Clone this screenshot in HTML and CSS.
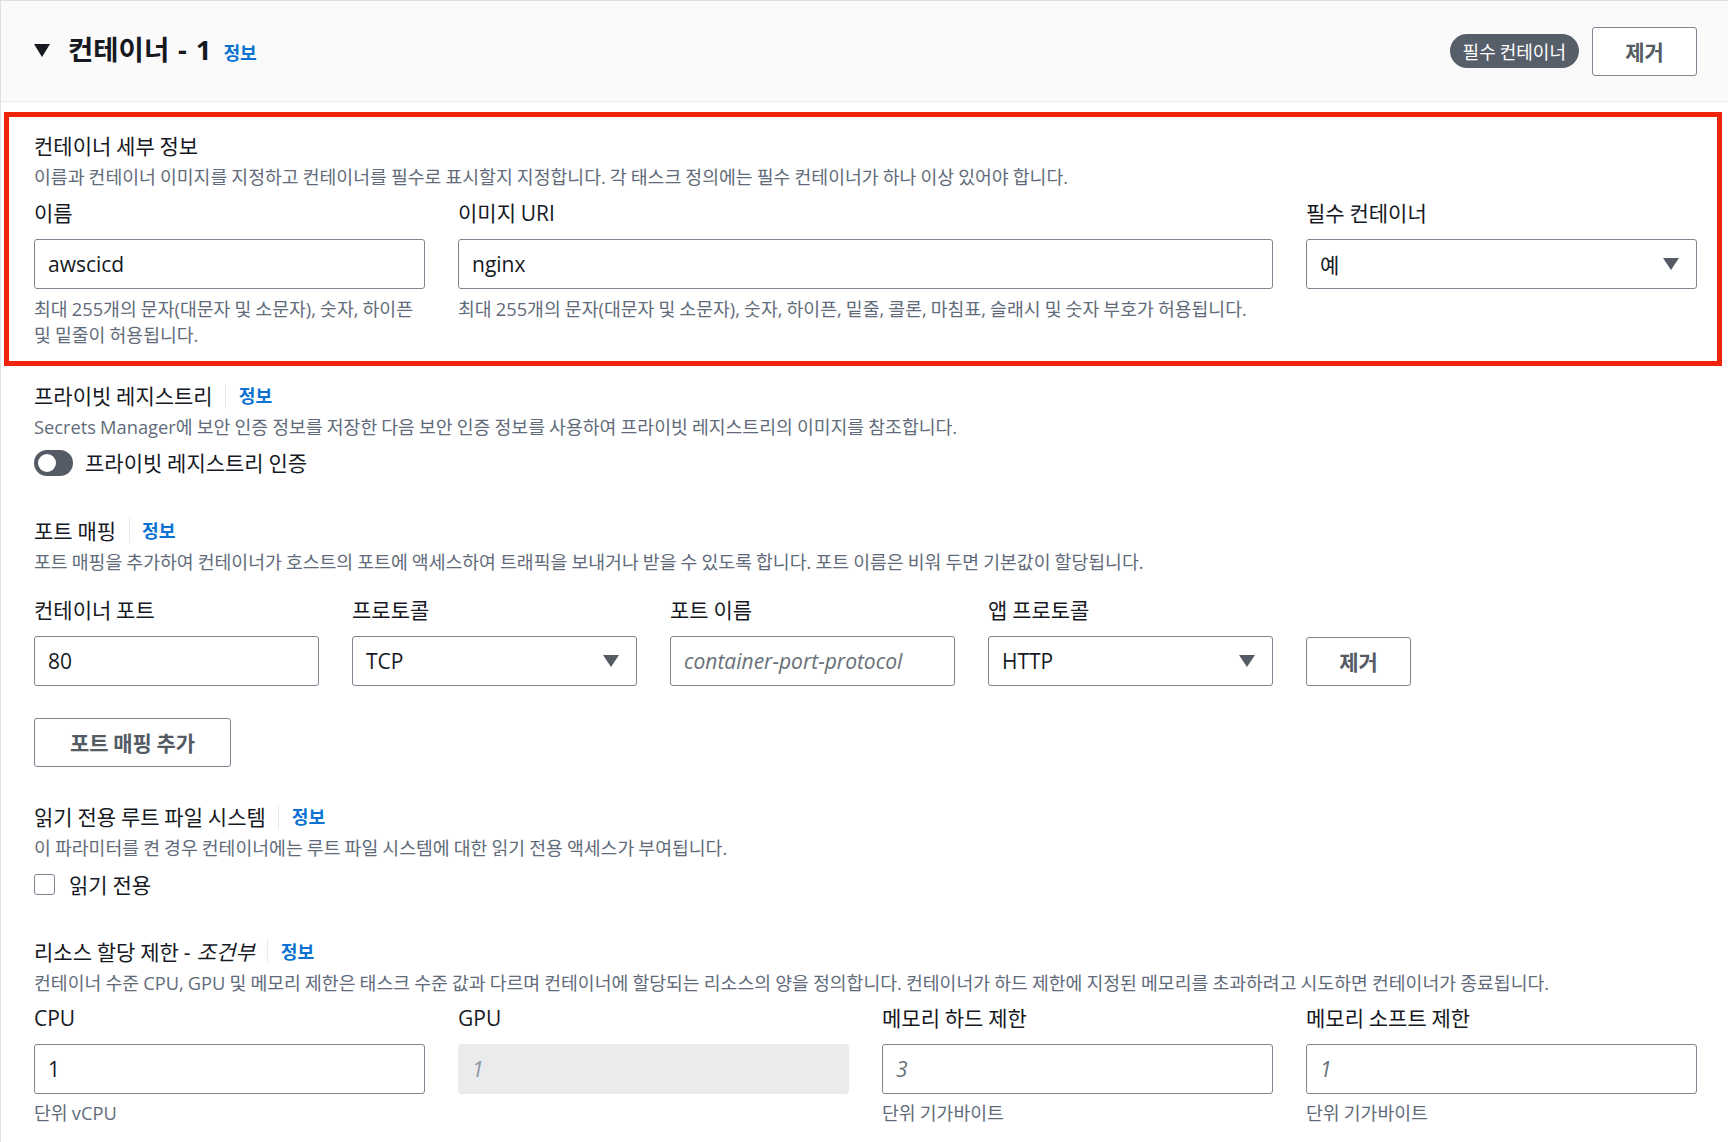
FILE: index.html
```html
<!DOCTYPE html>
<html lang="ko">
<head>
    <meta charset="UTF-8">
    <meta name="viewport" content="width=device-width, initial-scale=1.0">
    <title>컨테이너 - 1</title>
    <link rel="stylesheet" href="styles.css">
</head>
<body>
    <div class="panel">
        <header class="panel-header">
            <div class="title-group">
                <svg class="expand-caret" width="16" height="13" viewBox="0 0 16 13"><path d="M0 0h16L8 13z"/></svg>
                <h2 class="panel-title">컨테이너 - 1<a class="info-link title-info" href="#">정보</a></h2>
            </div>
            <div class="header-actions">
                <span class="badge">필수 컨테이너</span>
                <button class="btn btn-header">제거</button>
            </div>
        </header>

        <section class="section section-details">
            <h3 class="section-title">컨테이너 세부 정보</h3>
            <p class="section-desc">이름과 컨테이너 이미지를 지정하고 컨테이너를 필수로 표시할지 지정합니다. 각 태스크 정의에는 필수 컨테이너가 하나 이상 있어야 합니다.</p>
            <div class="field-grid">
                <div class="field">
                    <label class="field-label">이름</label>
                    <div class="input">awscicd</div>
                    <p class="field-help">최대 255개의 문자(대문자 및 소문자), 숫자, 하이픈 및 밑줄이 허용됩니다.</p>
                </div>
                <div class="field field-wide">
                    <label class="field-label">이미지 URI</label>
                    <div class="input">nginx</div>
                    <p class="field-help">최대 255개의 문자(대문자 및 소문자), 숫자, 하이픈, 밑줄, 콜론, 마침표, 슬래시 및 숫자 부호가 허용됩니다.</p>
                </div>
                <div class="field">
                    <label class="field-label">필수 컨테이너</label>
                    <div class="input select">
                        <span>예</span>
                        <svg class="select-caret" width="16" height="12" viewBox="0 0 16 12"><path d="M0 0h16L8 12z"/></svg>
                    </div>
                </div>
            </div>
        </section>

        <section class="section section-registry">
            <h3 class="section-title">프라이빗 레지스트리<span class="divider"></span><a class="info-link" href="#">정보</a></h3>
            <p class="section-desc">Secrets Manager에 보안 인증 정보를 저장한 다음 보안 인증 정보를 사용하여 프라이빗 레지스트리의 이미지를 참조합니다.</p>
            <label class="toggle-row">
                <span class="toggle"><span class="toggle-knob"></span></span>
                프라이빗 레지스트리 인증
            </label>
        </section>

        <section class="section section-ports">
            <h3 class="section-title">포트 매핑<span class="divider"></span><a class="info-link" href="#">정보</a></h3>
            <p class="section-desc">포트 매핑을 추가하여 컨테이너가 호스트의 포트에 액세스하여 트래픽을 보내거나 받을 수 있도록 합니다. 포트 이름은 비워 두면 기본값이 할당됩니다.</p>
            <div class="port-grid">
                <div class="field">
                    <label class="field-label">컨테이너 포트</label>
                    <div class="input">80</div>
                </div>
                <div class="field">
                    <label class="field-label">프로토콜</label>
                    <div class="input select">
                        <span>TCP</span>
                        <svg class="select-caret" width="16" height="12" viewBox="0 0 16 12"><path d="M0 0h16L8 12z"/></svg>
                    </div>
                </div>
                <div class="field">
                    <label class="field-label">포트 이름</label>
                    <div class="input placeholder">container-port-protocol</div>
                </div>
                <div class="field">
                    <label class="field-label">앱 프로토콜</label>
                    <div class="input select">
                        <span>HTTP</span>
                        <svg class="select-caret" width="16" height="12" viewBox="0 0 16 12"><path d="M0 0h16L8 12z"/></svg>
                    </div>
                </div>
                <div class="field field-action">
                    <button class="btn btn-row">제거</button>
                </div>
            </div>
            <button class="btn btn-add">포트 매핑 추가</button>
        </section>

        <section class="section section-readonly">
            <h3 class="section-title">읽기 전용 루트 파일 시스템<span class="divider"></span><a class="info-link" href="#">정보</a></h3>
            <p class="section-desc">이 파라미터를 켠 경우 컨테이너에는 루트 파일 시스템에 대한 읽기 전용 액세스가 부여됩니다.</p>
            <label class="check-row">
                <span class="checkbox"></span>
                읽기 전용
            </label>
        </section>

        <section class="section section-limits">
            <h3 class="section-title">리소스 할당 제한 - <em class="optional">조건부</em><span class="divider"></span><a class="info-link" href="#">정보</a></h3>
            <p class="section-desc">컨테이너 수준 CPU, GPU 및 메모리 제한은 태스크 수준 값과 다르며 컨테이너에 할당되는 리소스의 양을 정의합니다. 컨테이너가 하드 제한에 지정된 메모리를 초과하려고 시도하면 컨테이너가 종료됩니다.</p>
            <div class="field-grid limits-grid">
                <div class="field">
                    <label class="field-label">CPU</label>
                    <div class="input">1</div>
                    <p class="field-help">단위 vCPU</p>
                </div>
                <div class="field">
                    <label class="field-label">GPU</label>
                    <div class="input input-disabled placeholder">1</div>
                </div>
                <div class="field">
                    <label class="field-label">메모리 하드 제한</label>
                    <div class="input placeholder">3</div>
                    <p class="field-help">단위 기가바이트</p>
                </div>
                <div class="field">
                    <label class="field-label">메모리 소프트 제한</label>
                    <div class="input placeholder">1</div>
                    <p class="field-help">단위 기가바이트</p>
                </div>
            </div>
        </section>
    </div>
</body>
</html>
```

FILE: styles.css
```css
body {
    margin: 0;
    padding: 0;
    background-color: #fff;
    color: #16191f;
    font-family: "Open Sans", "Noto Sans CJK KR", sans-serif;
    word-spacing: -0.04em;
}

.panel {
    min-height: 1142px;
    box-sizing: border-box;
    border-top: 1px solid #dcdfe3;
    border-left: 1px solid #dcdfe3;
}

.panel-header {
    display: flex;
    justify-content: space-between;
    align-items: center;
    height: 101px;
    box-sizing: border-box;
    padding: 0 31px 0 33px;
    background-color: #fafafa;
    border-bottom: 1px solid #e9ebed;
}

.title-group {
    display: flex;
    align-items: center;
}

.expand-caret {
    fill: #16191f;
    margin-right: 18px;
    margin-top: -2px;
}

.panel-title {
    margin: 0;
    font-size: 27.5px;
    font-weight: 700;
    line-height: 32px;
    word-spacing: 0.06em;
}

.info-link {
    color: #0972d3;
    font-size: 18.2px;
    font-weight: 700;
    text-decoration: none;
    word-spacing: normal;
}

.title-info {
    margin-left: 12px;
}

.header-actions {
    display: flex;
    align-items: center;
    gap: 13px;
}

.badge {
    display: inline-flex;
    align-items: center;
    height: 34px;
    padding: 0 13px;
    border-radius: 17px;
    background-color: #565e69;
    color: #fff;
    font-size: 18px;
}

.btn {
    background: #fff;
    border: 1px solid #7d8590;
    border-radius: 3px;
    color: #545b64;
    font-family: inherit;
    font-weight: 700;
    font-size: 21px;
    word-spacing: -0.04em;
    cursor: pointer;
}

.btn-header {
    width: 105px;
    height: 49px;
}

.section {
    padding: 0 31px 0 33px;
}

.section-details {
    margin: 10px 6px 0 3px;
    padding: 15px 20px 13.5px 25px;
    border: 5px solid #f0240c;
}

.section-registry {
    margin-top: 16.5px;
}

.section-ports {
    margin-top: 39.5px;
}

.section-readonly {
    margin-top: 36.5px;
}

.section-limits {
    margin-top: 39px;
}

.section-title {
    display: flex;
    align-items: center;
    margin: 0;
    font-size: 21px;
    font-weight: 400;
    line-height: 28px;
}

.optional {
    font-style: italic;
    margin-left: 0.3em;
}

.divider {
    display: inline-block;
    width: 1px;
    height: 25px;
    margin: 0 12.5px;
    background-color: #e9ebed;
}

.section-desc {
    margin: 4px 0 0;
    color: #5f6b7a;
    font-size: 18.3px;
    line-height: 25px;
}

.field-grid {
    display: grid;
    grid-template-columns: repeat(4, 1fr);
    column-gap: 33px;
    margin-top: 10px;
}

.field-wide {
    grid-column: span 2;
}

.field-label {
    display: block;
    font-size: 21px;
    line-height: 28px;
    margin-bottom: 12px;
}

.input {
    display: flex;
    align-items: center;
    height: 50px;
    box-sizing: border-box;
    padding: 0 13px;
    border: 1px solid #7d8590;
    border-radius: 3px;
    background-color: #fff;
    font-size: 21px;
}

.select {
    justify-content: space-between;
    padding-right: 17px;
}

.select-caret {
    fill: #545b64;
}

.placeholder {
    color: #687078;
    font-style: italic;
}

.input-disabled {
    background-color: #e9ebed;
    border-color: #e9ebed;
    color: #8d96a0;
}

.field-help {
    margin: 7px 0 0;
    color: #5f6b7a;
    font-size: 18.3px;
    line-height: 25.5px;
}

.toggle-row,
.check-row {
    display: flex;
    align-items: center;
    font-size: 21px;
    line-height: 28px;
}

.toggle-row {
    margin-top: 10px;
    gap: 12px;
}

.toggle {
    display: flex;
    align-items: center;
    width: 39px;
    height: 26px;
    box-sizing: border-box;
    padding: 0 4px;
    border-radius: 13px;
    background-color: #545b64;
}

.toggle-knob {
    width: 18px;
    height: 18px;
    border-radius: 50%;
    background-color: #fff;
}

.port-grid {
    display: grid;
    grid-template-columns: repeat(4, 285px) 105px;
    column-gap: 33px;
    margin-top: 22px;
}

.field-action {
    display: flex;
    align-items: flex-end;
}

.btn-row {
    width: 105px;
    height: 49px;
}

.btn-add {
    display: block;
    margin-top: 32px;
    height: 49px;
    padding: 0 35px;
}

.check-row {
    margin-top: 10.5px;
    gap: 14px;
}

.checkbox {
    width: 21px;
    height: 21px;
    box-sizing: border-box;
    border: 1.5px solid #7d8590;
    border-radius: 3px;
    background-color: #fff;
}

.limits-grid {
    margin-top: 9.5px;
}

.limits-grid .field-help {
    margin-top: 6px;
    line-height: 25px;
}
```
